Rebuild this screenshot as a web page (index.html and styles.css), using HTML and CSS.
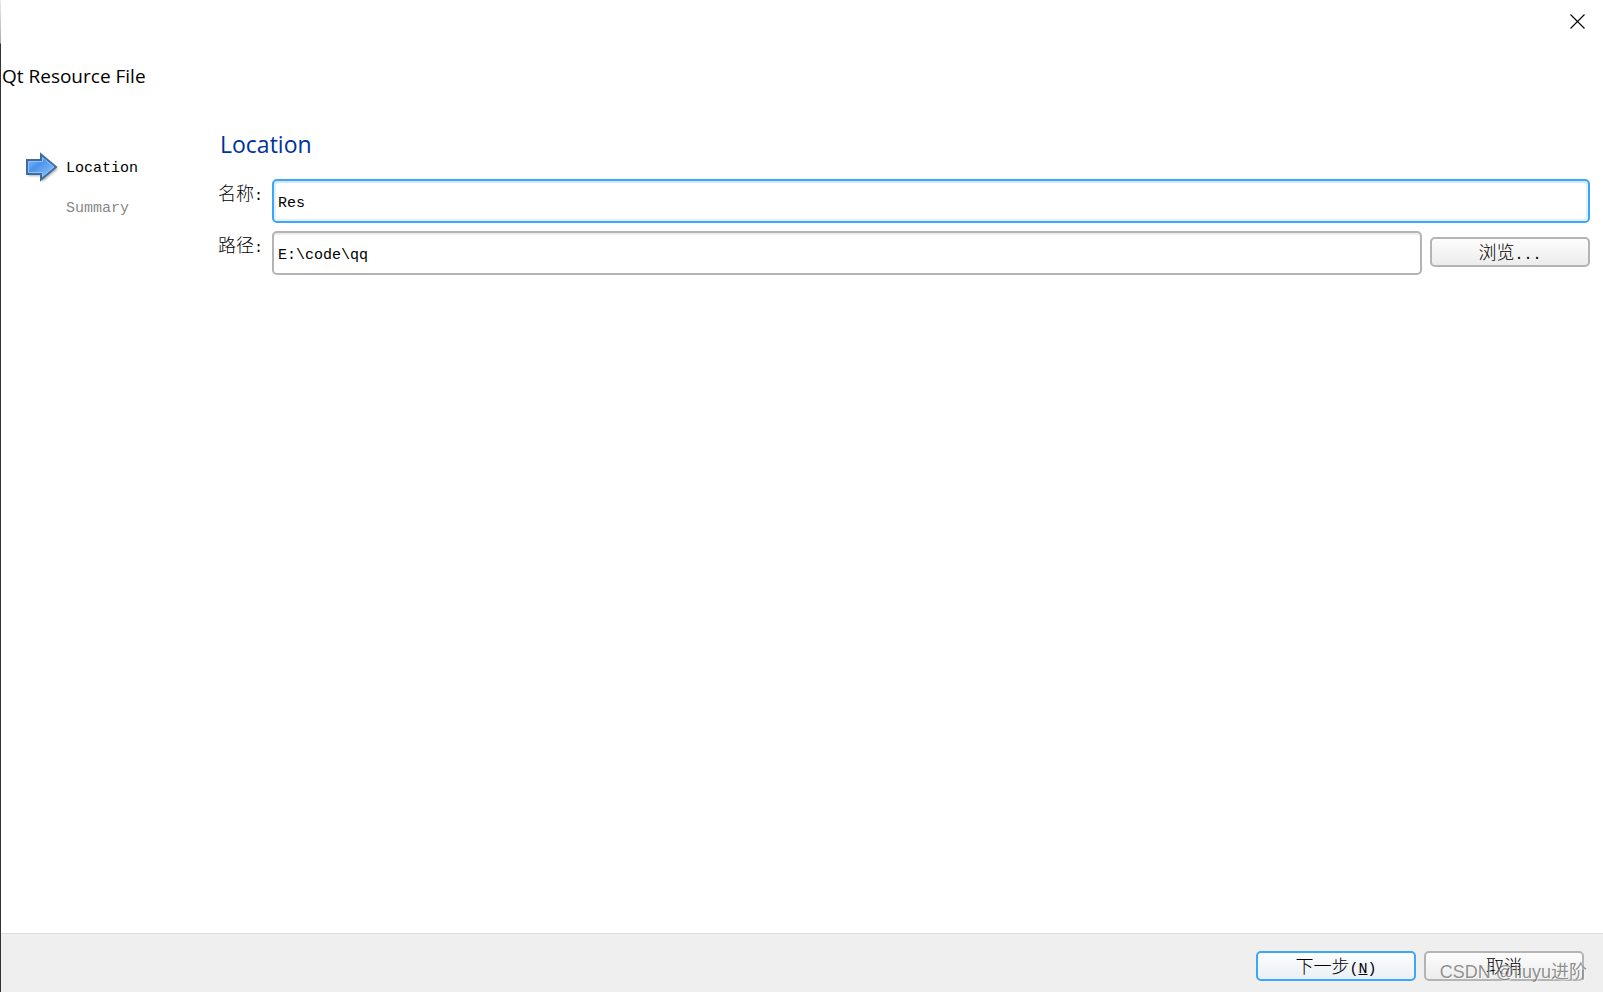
FILE: index.html
```html
<!DOCTYPE html>
<html lang="zh-CN">
<head>
<meta charset="utf-8">
<title>Qt Resource File</title>
<link rel="stylesheet" href="styles.css">
</head>
<body>
<div class="dialog">
  <header class="titlebar">
    <button class="close" type="button" aria-label="Close">
      <svg width="16" height="16" viewBox="0 0 16 16"><path d="M.5.5l14 14M14.500.5l-14 14" fill="none" stroke="#000" stroke-width="1.100"/></svg>
    </button>
  </header>
  <h1 class="title">Qt Resource File</h1>
  <div class="content">
    <ol class="steps">
      <li class="step step-current">
        <svg class="arrow" width="36" height="32" viewBox="0 0 36 32">
          <defs>
            <linearGradient id="fill" x1="0" y1="0" x2="1" y2="1">
              <stop offset="0" stop-color="#9cc6f7"/>
              <stop offset=".4" stop-color="#4a93ec"/>
              <stop offset="1" stop-color="#a5cdf8"/>
            </linearGradient>
            <filter id="shadow" x="-20%" y="-20%" width="150%" height="150%"><feGaussianBlur stdDeviation="1"/></filter>
          </defs>
          <path d="M3 10h14V4l16 13-16 13v-6H3z" fill="#000" opacity=".3" filter="url(#shadow)"/>
          <path d="M2 8h14V2.500L31 15 16 27.500V22H2z" fill="url(#fill)" stroke="#3d6c9f" stroke-width="2"/>
          <path d="M3.500 20.500v-11h14V5.500L29 15 17.500 24.500v-4z" fill="none" stroke="#8fc0f8" stroke-width="1"/>
        </svg>
        <span>Location</span>
      </li>
      <li class="step"><span>Summary</span></li>
    </ol>
    <main class="page">
      <h2 class="heading">Location</h2>
      <form class="form" id="location">
        <div class="row">
          <label class="label" for="name">名称<span class="latin">:</span></label>
          <input class="field field-active" id="name" type="text" value="Res">
        </div>
        <div class="row">
          <label class="label" for="path">路径<span class="latin">:</span></label>
          <input class="field" id="path" type="text" value="E:\code\qq">
          <button class="button browse" type="button">浏览<span class="latin">...</span></button>
        </div>
      </form>
    </main>
  </div>
  <footer class="footer">
    <button class="button button-default" type="submit" form="location">下一步<span class="latin">(<u>N</u>)</span></button>
    <button class="button" type="button">取消</button>
    <span class="watermark">CSDN @liuyu进阶</span>
  </footer>
</div>
</body>
</html>
```
FILE: styles.css
```css
* {
  box-sizing: border-box;
}

body {
  margin: 0;
  background: #fff;
  color: #000;
  font: 15px/20px "Liberation Mono", "Noto Sans CJK SC", monospace;
}

.dialog {
  display: flex;
  flex-direction: column;
  min-height: 100vh;
  border-left: 1px solid;
  border-image: linear-gradient(#eee 0, #aaa 44px, #333 45px, #333 100%) 1;
}

.titlebar {
  display: flex;
  justify-content: flex-end;
  padding: 14px 17px 0 0;
  height: 56px;
}

.close {
  width: 16px;
  height: 16px;
  padding: 0;
  border: 0;
  background: none;
}

.close svg {
  display: block;
}

.title {
  margin: 0;
  padding: 6px 1px;
  font: 400 19px/28px "Open Sans", "Noto Sans", sans-serif;
}

.content {
  display: flex;
  flex: 1;
  padding: 32px 13px 32px 0;
}

.steps {
  width: 216px;
  margin: 0;
  padding: 19px 0 0 24px;
  list-style: none;
  flex: none;
}

.step {
  display: flex;
  align-items: center;
  height: 40px;
  padding-left: 41px;
  color: #888;
}

.step span {
  padding-top: 4px;
}

.step-current {
  gap: 5px;
  padding-left: 0;
  color: #000;
}

.arrow {
  margin-top: 2px;
}

.page {
  flex: 1;
  min-width: 0;
}

.heading {
  margin: 0 0 15px;
  padding: 0 3px 4px;
  font: 400 23px/32px "Open Sans", "Noto Sans", sans-serif;
  color: #003399;
}

.form {
  display: grid;
  gap: 8px;
}

.row {
  display: flex;
  align-items: flex-start;
  gap: 8px;
}

.label {
  flex: none;
  width: 47px;
  padding: 3px 0 0 1px;
  font: 300 18px/20px "Noto Sans CJK SC", sans-serif;
  white-space: nowrap;
}

.latin {
  font-family: "Liberation Mono", monospace;
  font-size: 15px;
}

.field {
  flex: 1;
  min-width: 0;
  height: 44px;
  padding: 4px 4px 0;
  border: 2px solid #b4b4b4;
  border-radius: 5px;
  background: #fff;
  box-shadow: inset 0 2px #ededed;
  color: #000;
  font: inherit;
  outline: 0;
}

.field-active {
  border-color: #3ea6f8;
  box-shadow: inset 0 2px #d4e6f5, inset 0 0 0 2px #e3f1fd;
}

.button {
  width: 160px;
  height: 30px;
  padding: 0 0 2px;
  border: 2px solid #b4b4b4;
  border-radius: 5px;
  background: linear-gradient(#fdfdfd, #ececec);
  color: #000;
  font: 300 18px/24px "Noto Sans CJK SC", sans-serif;
}

.browse {
  margin-top: 6px;
}

.button-default {
  border-color: #3ea6f8;
  background: linear-gradient(#fdfeff, #e9f0f6);
}

.footer {
  position: relative;
  display: flex;
  justify-content: flex-end;
  gap: 8px;
  padding: 17px 19px 11px 0;
  border-top: 1px solid #dcdcdc;
  background: #efefef;
}

.watermark {
  position: absolute;
  right: 16px;
  bottom: 8px;
  color: rgba(110, 110, 110, .75);
  font: 18px/24px "Liberation Sans", "Noto Sans CJK SC", sans-serif;
  text-shadow: 1px 1px rgba(255, 255, 255, .6);
  pointer-events: none;
}
```
